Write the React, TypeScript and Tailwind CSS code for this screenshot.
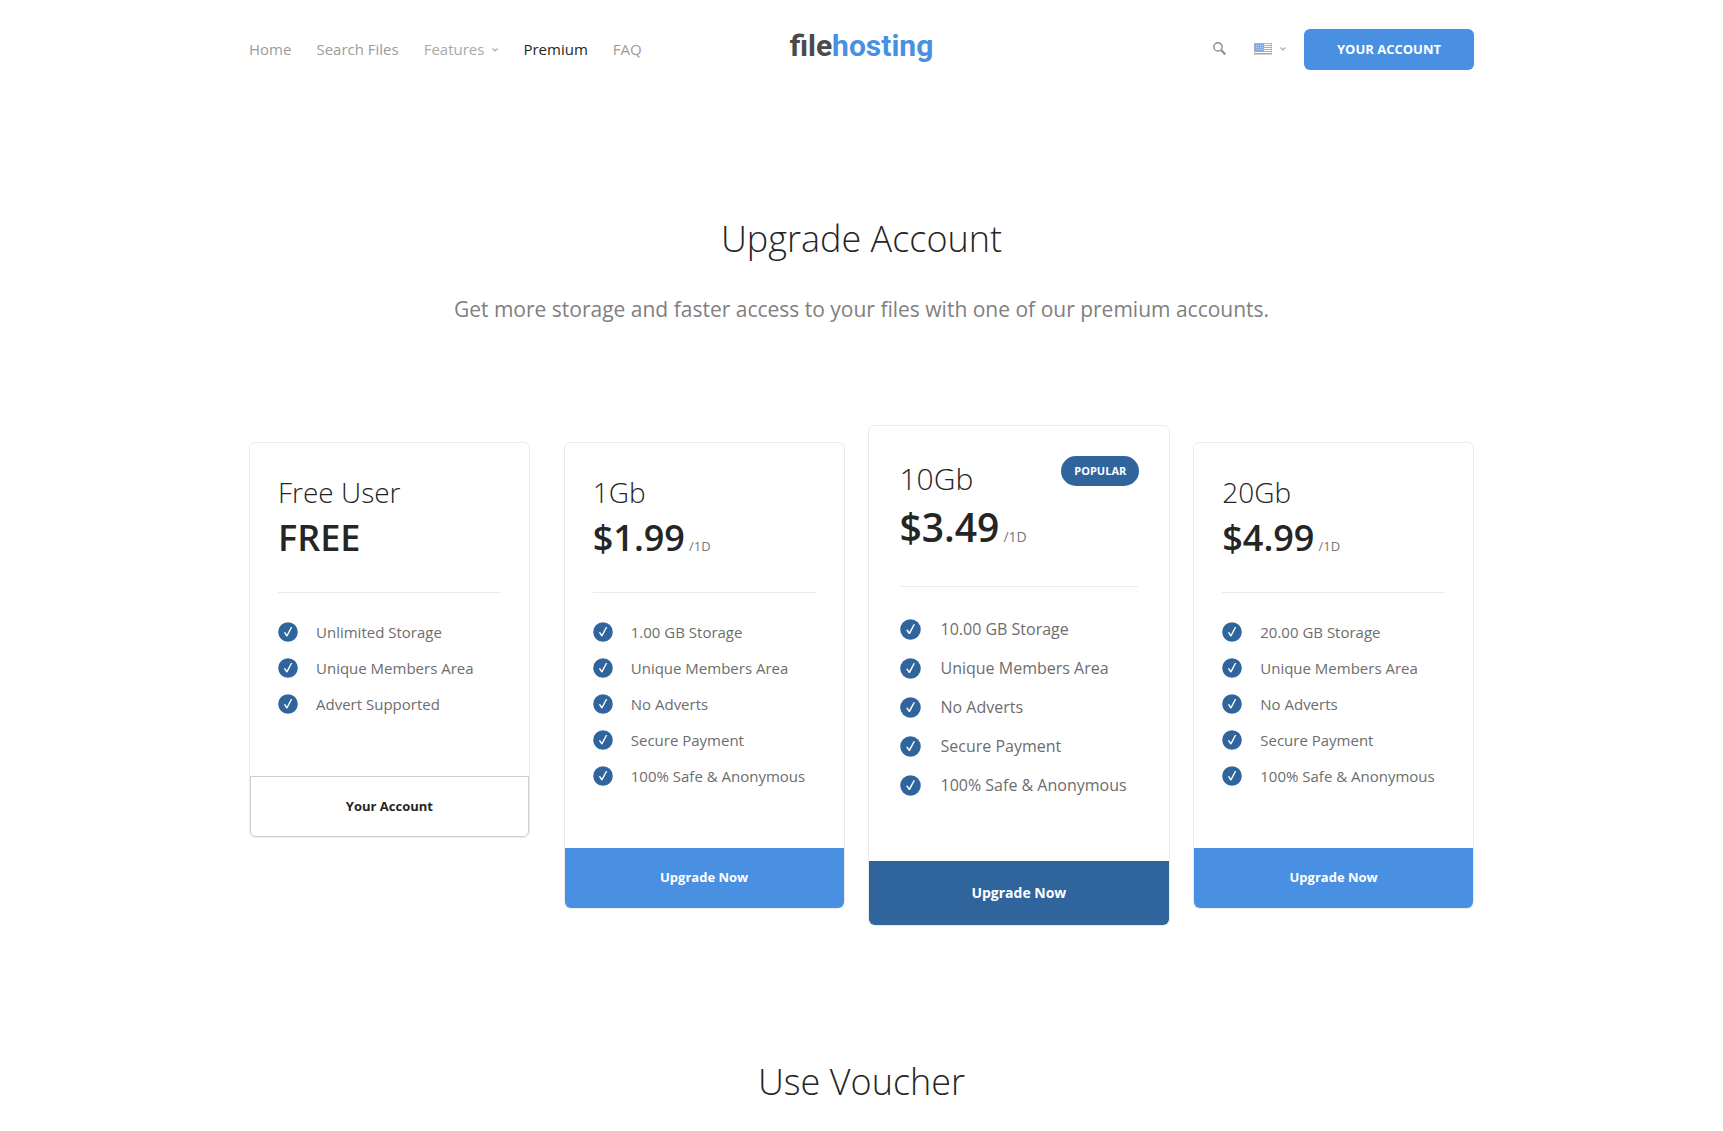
import React from "react";

type Plan = {
  name: string;
  price: string;
  period?: string;
  features: string[];
  action: string;
  kind: "free" | "paid" | "popular";
};

const common = ["Unique Members Area", "No Adverts", "Secure Payment", "100% Safe & Anonymous"];

const plans: Plan[] = [
  {
    name: "Free User",
    price: "FREE",
    features: ["Unlimited Storage", "Unique Members Area", "Advert Supported"],
    action: "Your Account",
    kind: "free",
  },
  { name: "1Gb", price: "$1.99", period: "/1D", features: ["1.00 GB Storage", ...common], action: "Upgrade Now", kind: "paid" },
  { name: "10Gb", price: "$3.49", period: "/1D", features: ["10.00 GB Storage", ...common], action: "Upgrade Now", kind: "popular" },
  { name: "20Gb", price: "$4.99", period: "/1D", features: ["20.00 GB Storage", ...common], action: "Upgrade Now", kind: "paid" },
];

function Caret() {
  return (
    <svg viewBox="0 0 6 4" className="h-1 w-1.5" fill="none" stroke="currentColor" strokeWidth="1.2" aria-hidden="true">
      <path d="M0.5 0.5 3 3 5.5 0.5" />
    </svg>
  );
}

function SearchIcon() {
  return (
    <svg viewBox="0 0 12 12" className="size-[13px]" fill="none" stroke="#8c8c8c" aria-hidden="true">
      <circle cx="4.6" cy="4.5" r="3.8" strokeWidth="1.3" />
      <path d="M7.4 7.4 11.3 11.3" strokeWidth="2" />
    </svg>
  );
}

function Flag() {
  return (
    <svg viewBox="0 0 18 12" className="h-3 w-[18px] opacity-60" aria-hidden="true">
      <rect width="18" height="12" fill="#fff" />
      {[0, 2, 4, 6, 8, 10].map((y) => (
        <rect key={y} y={y} width="18" height="1" fill="#e8403c" />
      ))}
      <rect width="10" height="8" fill="#2f6fd0" />
      {[2, 4, 6].map((y) =>
        [2, 4, 6, 8].map((x) => <rect key={`${x}-${y}`} x={x} y={y} width="0.8" height="0.8" fill="#c5d6f2" />),
      )}
      <rect x="0.5" y="0.5" width="17" height="11" fill="none" stroke="#a07a80" strokeOpacity="0.7" />
    </svg>
  );
}

function CheckBadge({ large }: { large: boolean }) {
  return (
    <svg viewBox="0 0 20 20" className={large ? "size-[21px] shrink-0" : "size-5 shrink-0"} aria-hidden="true">
      <circle cx="10" cy="10" r="9.8" fill="#30649d" />
      <path d="M5.8 10.4 7.1 10 8.8 12.4 12.9 5 14.3 5.1 9.5 14.2 8.4 14.4Z" fill="#fff" />
    </svg>
  );
}

function PlanCard({ plan }: { plan: Plan }) {
  const large = plan.kind === "popular";
  const button = {
    free: "h-[61px] border border-[#cfcfcf] text-[13px] text-[#252525]",
    paid: "h-[60px] bg-[#4a90e2] text-[13px] text-white",
    popular: "h-16 bg-[#30649d] text-sm text-white",
  }[plan.kind];
  return (
    <article
      className={
        "relative flex flex-col rounded-md border border-[#ebebeb] bg-white " + (large ? "-mx-[11px] -mt-[17px]" : "")
      }
    >
      {large && (
        <span className="absolute top-[30px] right-[30px] flex h-[30px] items-center rounded-full bg-[#30649d] px-[13px] text-[11px] font-bold text-white">
          POPULAR
        </span>
      )}
      <div className={large ? "px-[31px] pt-[31px]" : "px-7 pt-[27px]"}>
        <header className={"border-b border-[#ebebeb] " + (large ? "pb-[33px]" : "pb-[30px]")}>
          <h2 className={"leading-11 font-light text-[#252525] " + (large ? "text-[30px]" : "text-[28px]")}>{plan.name}</h2>
          <p
            className={
              "flex items-baseline gap-1 font-semibold text-[#252525] " +
              (large ? "text-[39px] leading-[52px]" : "text-4xl leading-12")
            }
          >
            {plan.price}
            {plan.period && (
              <span className={"font-normal text-[#777] " + (large ? "text-sm leading-none" : "text-[13px] leading-none")}>
                {plan.period}
              </span>
            )}
          </p>
        </header>
        <ul
          className={
            "text-[#6d6d6d] " +
            (large ? "pt-[23px] pb-[56px] text-base leading-[39px]" : "pt-[21px] pb-[54px] text-[15px] leading-9")
          }
        >
          {plan.features.map((f) => (
            <li key={f} className={"flex items-center " + (large ? "gap-5" : "gap-[18px]")}>
              <CheckBadge large={large} />
              <span className="whitespace-nowrap">{f}</span>
            </li>
          ))}
        </ul>
      </div>
      <button type="button" className={"w-full rounded-b-md font-bold " + button}>
        {plan.action}
      </button>
    </article>
  );
}

export default function App() {
  return (
    <div className="min-h-screen overflow-hidden bg-white font-['Open_Sans',sans-serif]">
      <div className="mx-auto max-w-[1225px]">
        <header className="grid h-[99px] grid-cols-[1fr_auto_1fr] items-center">
          <nav aria-label="Main" className="flex items-center gap-[25px] text-[15px] text-[#9b9b9b]">
            <a href="#home">Home</a>
            <a href="#search">Search Files</a>
            <a href="#features" className="flex items-center gap-2 text-[#a9a9a9]">
              Features <Caret />
            </a>
            <a href="#premium" className="font-medium text-[#252525]">Premium</a>
            <a href="#faq">FAQ</a>
          </nav>
          <a href="#top" className="pb-2 font-['Roboto',sans-serif] text-[30px] leading-10 font-bold text-[#4a4a4a]">
            file<span className="text-[#4a90e2]">hosting</span>
          </a>
          <div className="flex items-center justify-end">
            <button type="button" aria-label="Search" className="mr-7 pb-0.5">
              <SearchIcon />
            </button>
            <button type="button" aria-label="Language" className="mr-[18px] flex items-center gap-2 pb-0.5 text-[#a9a9a9]">
              <Flag />
              <Caret />
            </button>
            <button type="button" className="h-[41px] rounded-md bg-[#4a90e2] px-[33px] text-[13px] font-bold text-white">
              YOUR ACCOUNT
            </button>
          </div>
        </header>

        <main>
          <section className="pt-[114px] text-center">
            <h1 className="text-4xl leading-[52px] font-light text-[#252525]">Upgrade Account</h1>
            <p className="mt-7 text-[21px] leading-8 text-[#808080]">
              Get more storage and faster access to your files with one of our premium accounts.
            </p>
          </section>

          <section aria-label="Plans" className="mt-[117px] grid grid-cols-4 items-start gap-[34px]">
            {plans.map((p) => (
              <PlanCard key={p.name} plan={p} />
            ))}
          </section>

          <section className="pt-[130px] pb-6 text-center">
            <h2 className="text-4xl leading-[52px] font-light text-[#252525]">Use Voucher</h2>
          </section>
        </main>
      </div>
    </div>
  );
}
